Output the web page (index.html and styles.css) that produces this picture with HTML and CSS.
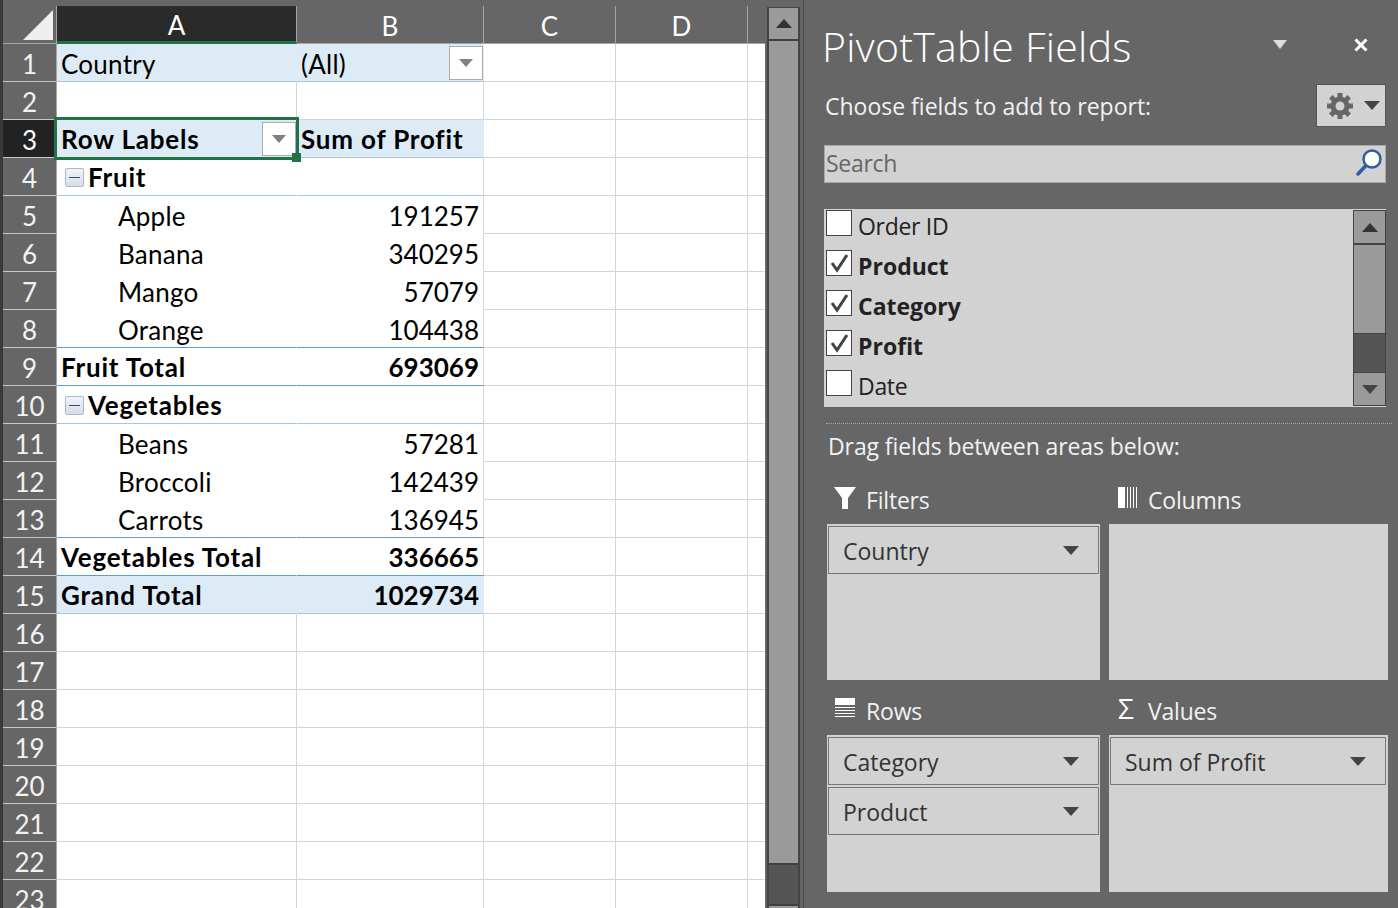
FILE: index.html
```html
<!DOCTYPE html>
<html lang="en">
  <head>
    <meta charset="UTF-8" />
    <title>PivotTable Fields</title>
    <link rel="stylesheet" href="styles.css">
  </head>
  <body>
    <main class="sheet">
      <div class="row head-row">
        <div class="corner"><span class="corner-mark"></span></div>
        <div class="col-head col-on">A</div>
        <div class="col-head">B</div>
        <div class="col-head">C</div>
        <div class="col-head">D</div>
        <div class="col-head col-end"></div>
      </div>

      <div class="row"><div class="num">1</div><div class="cell blue line-soft no-v">Country</div><div class="cell blue line-soft no-v">(All)<span class="drop"><i class="tri tri-grey"></i></span></div><div class="cell"></div><div class="cell"></div><div class="cell no-v"></div></div>
      <div class="row"><div class="num">2</div><div class="cell"></div><div class="cell"></div><div class="cell"></div><div class="cell"></div><div class="cell no-v"></div></div>
      <div class="row"><div class="num num-on">3</div><div class="cell blue line-soft no-v bold">Row Labels<span class="drop"><i class="tri tri-grey"></i></span><span class="select-box"><span class="select-handle"></span></span></div><div class="cell blue line-soft no-v bold">Sum of Profit</div><div class="cell"></div><div class="cell"></div><div class="cell no-v"></div></div>
      <div class="row"><div class="num">4</div><div class="cell line-soft no-v bold"><span class="toggle"></span>Fruit</div><div class="cell line-soft"></div><div class="cell"></div><div class="cell"></div><div class="cell no-v"></div></div>
      <div class="row"><div class="num">5</div><div class="cell no-line no-v item">Apple</div><div class="cell no-line val">191257</div><div class="cell"></div><div class="cell"></div><div class="cell no-v"></div></div>
      <div class="row"><div class="num">6</div><div class="cell no-line no-v item">Banana</div><div class="cell no-line val">340295</div><div class="cell"></div><div class="cell"></div><div class="cell no-v"></div></div>
      <div class="row"><div class="num">7</div><div class="cell no-line no-v item">Mango</div><div class="cell no-line val">57079</div><div class="cell"></div><div class="cell"></div><div class="cell no-v"></div></div>
      <div class="row"><div class="num">8</div><div class="cell line-hard no-v item">Orange</div><div class="cell line-hard val">104438</div><div class="cell"></div><div class="cell"></div><div class="cell no-v"></div></div>
      <div class="row"><div class="num">9</div><div class="cell line-hard no-v bold">Fruit Total</div><div class="cell line-hard val bold">693069</div><div class="cell"></div><div class="cell"></div><div class="cell no-v"></div></div>
      <div class="row"><div class="num">10</div><div class="cell line-soft no-v bold"><span class="toggle"></span>Vegetables</div><div class="cell line-soft"></div><div class="cell"></div><div class="cell"></div><div class="cell no-v"></div></div>
      <div class="row"><div class="num">11</div><div class="cell no-line no-v item">Beans</div><div class="cell no-line val">57281</div><div class="cell"></div><div class="cell"></div><div class="cell no-v"></div></div>
      <div class="row"><div class="num">12</div><div class="cell no-line no-v item">Broccoli</div><div class="cell no-line val">142439</div><div class="cell"></div><div class="cell"></div><div class="cell no-v"></div></div>
      <div class="row"><div class="num">13</div><div class="cell line-hard no-v item">Carrots</div><div class="cell line-hard val">136945</div><div class="cell"></div><div class="cell"></div><div class="cell no-v"></div></div>
      <div class="row"><div class="num">14</div><div class="cell line-hard no-v bold">Vegetables Total</div><div class="cell line-hard val bold">336665</div><div class="cell"></div><div class="cell"></div><div class="cell no-v"></div></div>
      <div class="row"><div class="num">15</div><div class="cell blue line-soft no-v bold">Grand Total</div><div class="cell blue line-soft no-v val bold">1029734</div><div class="cell"></div><div class="cell"></div><div class="cell no-v"></div></div>
      <div class="row"><div class="num">16</div><div class="cell"></div><div class="cell"></div><div class="cell"></div><div class="cell"></div><div class="cell no-v"></div></div>
      <div class="row"><div class="num">17</div><div class="cell"></div><div class="cell"></div><div class="cell"></div><div class="cell"></div><div class="cell no-v"></div></div>
      <div class="row"><div class="num">18</div><div class="cell"></div><div class="cell"></div><div class="cell"></div><div class="cell"></div><div class="cell no-v"></div></div>
      <div class="row"><div class="num">19</div><div class="cell"></div><div class="cell"></div><div class="cell"></div><div class="cell"></div><div class="cell no-v"></div></div>
      <div class="row"><div class="num">20</div><div class="cell"></div><div class="cell"></div><div class="cell"></div><div class="cell"></div><div class="cell no-v"></div></div>
      <div class="row"><div class="num">21</div><div class="cell"></div><div class="cell"></div><div class="cell"></div><div class="cell"></div><div class="cell no-v"></div></div>
      <div class="row"><div class="num">22</div><div class="cell"></div><div class="cell"></div><div class="cell"></div><div class="cell"></div><div class="cell no-v"></div></div>
      <div class="row"><div class="num">23</div><div class="cell"></div><div class="cell"></div><div class="cell"></div><div class="cell"></div><div class="cell no-v"></div></div>
    </main>

    <div class="sheet-scroll">
      <div class="scroll-btn"><i class="tri tri-up tri-dark"></i></div>
      <div class="scroll-thumb"></div>
      <div class="scroll-btn scroll-btn-end"></div>
    </div>

    <aside class="panel">
      <header class="panel-title">
        <h1>PivotTable Fields</h1>
        <i class="tri tri-light"></i>
        <svg class="close-icon" width="14" height="14" viewBox="0 0 14 14"><path d="M1.5 1.5l11 11M12.5 1.5l-11 11" stroke="#fff" stroke-width="3" fill="none"/></svg>
      </header>

      <div class="choose-row">
        <p>Choose fields to add to report:</p>
        <div class="gear-btn">
          <svg width="26" height="26" viewBox="0 0 26 26">
            <path d="M13 0v26M0 13h26M3.8 3.8l18.4 18.4M22.2 3.8L3.8 22.2" stroke="#666" stroke-width="5" fill="none"/>
            <circle cx="13" cy="13" r="9.5" fill="#666"/>
            <circle cx="13" cy="13" r="4.5" fill="#d2d2d2"/>
          </svg>
          <i class="tri tri-dark"></i>
        </div>
      </div>

      <div class="search">
        <span>Search</span>
        <svg width="28" height="28" viewBox="0 0 28 28">
          <circle cx="17" cy="10" r="8.5" fill="#fff" stroke="#2b5f9e" stroke-width="2.5"/>
          <path d="M10.5 17L3 25" stroke="#2b5f9e" stroke-width="3.5" stroke-linecap="round"/>
        </svg>
      </div>

      <div class="field-list">
        <ul>
          <li><span class="check"></span>Order ID</li>
          <li class="picked"><span class="check"><svg width="24" height="24" viewBox="0 0 24 24"><path d="M5 12l5 7L20 4" stroke="#444" stroke-width="3" fill="none"/></svg></span>Product</li>
          <li class="picked"><span class="check"><svg width="24" height="24" viewBox="0 0 24 24"><path d="M5 12l5 7L20 4" stroke="#444" stroke-width="3" fill="none"/></svg></span>Category</li>
          <li class="picked"><span class="check"><svg width="24" height="24" viewBox="0 0 24 24"><path d="M5 12l5 7L20 4" stroke="#444" stroke-width="3" fill="none"/></svg></span>Profit</li>
          <li><span class="check"></span>Date</li>
        </ul>
        <div class="list-scroll">
          <div class="list-btn"><i class="tri tri-up tri-dark"></i></div>
          <div class="list-thumb"></div>
          <div class="list-track"></div>
          <div class="list-btn"><i class="tri tri-dark"></i></div>
        </div>
      </div>

      <p class="drag-label">Drag fields between areas below:</p>

      <div class="areas">
        <section class="area">
          <h2 class="area-head">
            <svg width="22" height="22" viewBox="0 0 22 22"><path d="M0 0h22l-8 11v11H8V11z" fill="#fff"/></svg>
            Filters
          </h2>
          <div class="area-box">
            <div class="pill">Country<i class="tri tri-dark"></i></div>
          </div>
        </section>
        <section class="area area-right">
          <h2 class="area-head">
            <svg width="22" height="22" viewBox="0 0 22 22"><path d="M0 0h7v21H0zM9 0h1v21H9zM12 0h1v21h-1zM15 0h1v21h-1zM18 0h1v21h-1z" fill="#fff"/></svg>
            Columns
          </h2>
          <div class="area-box"></div>
        </section>
        <section class="area">
          <h2 class="area-head">
            <svg width="22" height="22" viewBox="0 0 22 22"><path d="M1 2h20v7H1zM1 11h20v1H1zM1 14h20v1H1zM1 17h20v1H1zM1 20h20v1H1z" fill="#fff"/></svg>
            Rows
          </h2>
          <div class="area-box">
            <div class="pill">Category<i class="tri tri-dark"></i></div>
            <div class="pill">Product<i class="tri tri-dark"></i></div>
          </div>
        </section>
        <section class="area area-right">
          <h2 class="area-head">
            <span class="sigma">Σ</span>
            Values
          </h2>
          <div class="area-box area-box-values">
            <div class="pill">Sum of Profit<i class="tri tri-dark"></i></div>
          </div>
        </section>
      </div>
    </aside>
  </body>
</html>
```

FILE: styles.css
```css
* {
  box-sizing: border-box;
}

html,
body {
  height: 100%;
}

body {
  display: flex;
  margin: 0;
  overflow: hidden;
  background-color: #666;
  font-family: "Open Sans", sans-serif;
}

/* triangles */
.tri {
  display: block;
  width: 0;
  height: 0;
  border-left: 8px solid transparent;
  border-right: 8px solid transparent;
  border-top: 9px solid #444;
}

.tri-dark {
  border-top-color: #444;
}

.tri-grey {
  border-left-width: 7px;
  border-right-width: 7px;
  border-top: 8px solid #808080;
}

.tri-light {
  border-left-width: 7px;
  border-right-width: 7px;
  border-top-color: #ddd;
}

.tri-up {
  border-top: 0;
  border-bottom: 9px solid #333;
}

/* sheet */
.sheet {
  flex: none;
  width: 765px;
  height: 908px;
  overflow: hidden;
  border-left: 3px solid #3a3a3a;
  font-family: "Lato", sans-serif;
  font-size: 26px;
  color: #000;
}

.row {
  display: grid;
  grid-template-columns: 54px 240px 187px 132px 132px 17px;
  height: 38px;
}

.head-row {
  height: 44px;
  padding-top: 6px;
  border-bottom: 1px solid #a6a6a6;
}

.corner {
  position: relative;
  border-right: 1px solid #a6a6a6;
}

.corner-mark {
  position: absolute;
  left: 20px;
  top: 4px;
  width: 30px;
  height: 30px;
  background-color: #eee;
  clip-path: polygon(100% 0, 100% 100%, 0 100%);
}

.col-head {
  display: flex;
  align-items: center;
  justify-content: center;
  padding-top: 3px;
  border-right: 1px solid #a6a6a6;
  color: #fff;
  line-height: 1;
}

.col-on {
  background-color: #2a2a2a;
  border-bottom: 3px solid #217346;
  margin-bottom: -1px;
}

.col-end {
  border-right: 0;
}

.num {
  display: flex;
  align-items: center;
  justify-content: center;
  padding-top: 2px;
  border-right: 1px solid #a6a6a6;
  border-bottom: 1px solid #c8c8c8;
  background-color: #666;
  color: #f2f2f2;
}

.num-on {
  background-color: #222;
  color: #fff;
}

.cell {
  position: relative;
  display: flex;
  align-items: center;
  padding: 2px 4px 0;
  background-color: #fff;
  border-right: 1px solid #d4d4d4;
  border-bottom: 1px solid #d4d4d4;
  white-space: nowrap;
  letter-spacing: 0.25px;
}

.blue {
  background-color: #ddebf7;
}

.no-v {
  border-right-color: transparent;
}

.no-line {
  border-bottom-color: transparent;
}

.line-soft {
  border-bottom-color: #a9c4e6;
}

.line-hard {
  border-bottom-color: #5b9bd5;
}

.bold {
  padding-top: 1px;
  font-weight: 700;
  letter-spacing: 0.8px;
}

.item {
  padding-left: 61px;
}

.val {
  justify-content: flex-end;
  letter-spacing: 0;
}

.toggle {
  position: relative;
  flex: none;
  width: 19px;
  height: 19px;
  margin: 0 4px;
  border: 1px solid #a9b9d3;
  border-radius: 2px;
  background: linear-gradient(#f2f4f8, #d6dbe6);
}

.toggle::after {
  content: "";
  position: absolute;
  left: 3px;
  right: 3px;
  top: 8px;
  height: 1px;
  background-color: #39506f;
}

.drop {
  position: absolute;
  right: 0;
  top: 2px;
  display: flex;
  align-items: center;
  justify-content: center;
  width: 34px;
  height: 34px;
  border: 1px solid #aaa;
  background-color: #fff;
}

.select-box {
  position: absolute;
  left: -3px;
  top: -3px;
  width: 245px;
  height: 43px;
  border: 3px solid #217346;
  z-index: 2;
}

.select-handle {
  position: absolute;
  right: -5px;
  bottom: -5px;
  width: 9px;
  height: 9px;
  background-color: #217346;
}

/* scrollbar next to the sheet */
.sheet-scroll {
  flex: none;
  display: flex;
  flex-direction: column;
  width: 33px;
  height: 901px;
  margin: 7px 3px 0 2px;
  background-color: #555;
  border: 1px solid #444;
  border-width: 1px 2px 0 2px;
}

.scroll-btn {
  display: flex;
  align-items: center;
  justify-content: center;
  flex: none;
  height: 33px;
  border-bottom: 2px solid #404040;
  background-color: #9a9a9a;
}

.scroll-thumb {
  flex: none;
  height: 824px;
  background-color: #9a9a9a;
  border-bottom: 2px solid #404040;
}

.scroll-btn-end {
  margin-top: 39px;
  border-top: 2px solid #404040;
}

/* field panel */
.panel {
  flex: 1;
  min-width: 0;
  padding: 0 12px 0 20px;
  border-left: 1px solid #4c4c4c;
  color: #f2f2f2;
}

.panel-title {
  display: flex;
  align-items: center;
  height: 84px;
  padding-top: 8px;
}

.panel-title h1 {
  flex: 1;
  margin: 0 0 0 -2px;
  font-size: 41px;
  font-weight: 300;
  letter-spacing: 0.27px;
  color: #fff;
}

.panel-title .tri {
  margin: -3px 67px 0 0;
}

.close-icon {
  margin: -3px 18px 0 0;
}

.choose-row {
  display: flex;
  align-items: center;
  justify-content: space-between;
  height: 43px;
}

.choose-row p {
  margin: 0;
  padding-left: 1px;
  font-size: 23px;
}

.gear-btn {
  display: flex;
  align-items: center;
  gap: 11px;
  width: 70px;
  height: 43px;
  padding-left: 10px;
  background-color: #d2d2d2;
  border: 1px solid #555;
}

.search {
  display: flex;
  align-items: center;
  justify-content: space-between;
  height: 38px;
  margin-top: 18px;
  padding: 0 2px 2px 1px;
  background-color: #d2d2d2;
  border: 1px solid #a8a8a8;
  color: #666;
  font-size: 23px;
  letter-spacing: -0.3px;
}

.field-list {
  display: flex;
  height: 198px;
  margin-top: 26px;
  background-color: #d2d2d2;
  color: #222;
  font-size: 23px;
  letter-spacing: -0.3px;
}

.field-list ul {
  flex: 1;
  margin: 0;
  padding: 0 0 0 2px;
  list-style: none;
}

.field-list li {
  display: flex;
  align-items: center;
  gap: 6px;
  height: 40px;
  padding-bottom: 6px;
}

.picked {
  font-weight: 700;
  letter-spacing: 0;
}

.check {
  display: flex;
  align-items: center;
  justify-content: center;
  width: 26px;
  height: 26px;
  margin-top: -6px;
  background-color: #fff;
  border: 1px solid #444;
}

.list-scroll {
  flex: none;
  display: flex;
  flex-direction: column;
  width: 33px;
  height: 196px;
  margin-top: 1px;
  background-color: #555;
  border: 1px solid #444;
}

.list-btn {
  display: flex;
  align-items: center;
  justify-content: center;
  flex: none;
  height: 32px;
  background-color: #9a9a9a;
}

.list-thumb {
  flex: none;
  height: 91px;
  background-color: #9a9a9a;
  border: solid #444;
  border-width: 2px 0 1px;
}

.list-track {
  flex: 1;
  border-bottom: 1px solid #444;
}

.drag-label {
  height: 47px;
  margin: 16px -6px 0 2px;
  padding: 6px 0 0 2px;
  border-top: 1px dotted #a8a8a8;
  font-size: 23px;
  letter-spacing: -0.1px;
}

.areas {
  display: grid;
  grid-template-columns: 273px 279px;
  column-gap: 9px;
  margin-left: 3px;
}

.area-head {
  display: flex;
  align-items: center;
  gap: 10px;
  height: 54px;
  margin: 0;
  padding: 6px 0 0 7px;
  font-size: 23px;
  font-weight: 400;
  letter-spacing: -0.2px;
}

.area-head svg {
  margin-bottom: 4px;
}

.area-right .area-head {
  gap: 8px;
  padding-left: 9px;
}

.area:nth-child(n + 3) .area-head {
  height: 55px;
  padding-top: 7px;
}

.area:nth-child(n + 3) .area-head svg {
  margin-bottom: 8px;
}

.sigma {
  width: 22px;
  margin-bottom: 6px;
  font-size: 28px;
  line-height: 1;
  color: #fff;
}

.area-box {
  height: 156px;
  padding: 2px 1px;
  background-color: #d2d2d2;
  color: #333;
}

.area:nth-child(n + 3) .area-box {
  height: 157px;
}

.area-box-values {
  padding-right: 2px;
}

.pill {
  display: flex;
  align-items: center;
  justify-content: space-between;
  height: 48px;
  margin-bottom: 2px;
  padding: 1px 19px 0 14px;
  border: 1px solid #777;
  font-size: 23px;
}
```
